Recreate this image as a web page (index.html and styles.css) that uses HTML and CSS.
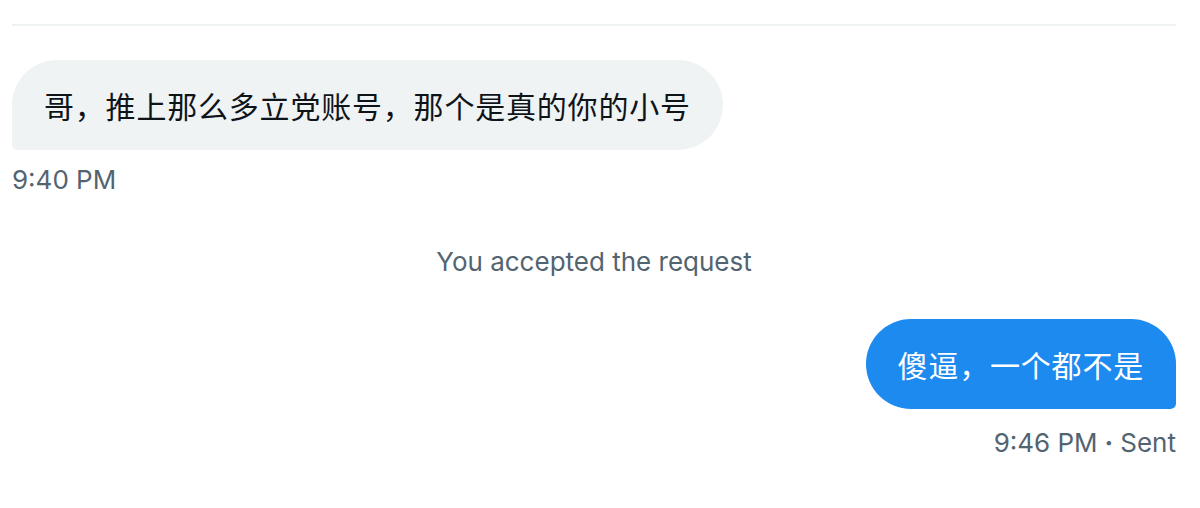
FILE: index.html
```html
<!DOCTYPE html>
<html lang="zh-CN">
<head>
<meta charset="utf-8">
<title>Messages</title>
<link rel="stylesheet" href="styles.css">
</head>
<body>
<div class="thread">
  <div class="divider"></div>
  <div class="msg msg-in">
    <div class="bubble bubble-in">哥，推上那么多立党账号，那个是真的你的小号</div>
    <div class="meta">9:40 PM</div>
  </div>
  <div class="notice">You accepted the request</div>
  <div class="msg msg-out">
    <div class="bubble bubble-out">傻逼，一个都不是</div>
    <div class="meta">9:46 PM<span class="dot">·</span>Sent</div>
  </div>
</div>
</body>
</html>
```

FILE: styles.css
```css
html, body {
  margin: 0;
  padding: 0;
  background: #ffffff;
}
body {
  font-family: Inter, "Noto Sans CJK SC", "Noto Sans", sans-serif;
  -webkit-font-smoothing: antialiased;
}
.thread {
  width: 1164px;
  padding: 24px 0 0 12px;
  display: flex;
  flex-direction: column;
}
.divider {
  height: 2px;
  background: #eff3f4;
}
.msg {
  display: flex;
  flex-direction: column;
}
.msg-in {
  align-items: flex-start;
  margin-top: 34px;
}
.msg-out {
  align-items: flex-end;
  margin-top: 41px;
}
.bubble {
  font-family: "Noto Sans CJK SC", sans-serif;
  font-size: 30px;
  letter-spacing: 0.8px;
  line-height: 42px;
  padding: 24px 32px;
  border-radius: 48px;
}
.bubble-in {
  background: #eff3f4;
  color: #0f1419;
  border-bottom-left-radius: 6px;
}
.bubble-out {
  background: #1d8aef;
  color: #ffffff;
  border-bottom-right-radius: 6px;
}
.meta {
  font-size: 26px;
  line-height: 32px;
  color: #536471;
  margin-top: 14px;
}
.msg-out .meta {
  margin-top: 18px;
}
.dot {
  margin: 0 7px;
  font-weight: 700;
}
.notice {
  text-align: center;
  font-size: 26px;
  line-height: 32px;
  color: #536471;
  margin-top: 50px;
}
```
